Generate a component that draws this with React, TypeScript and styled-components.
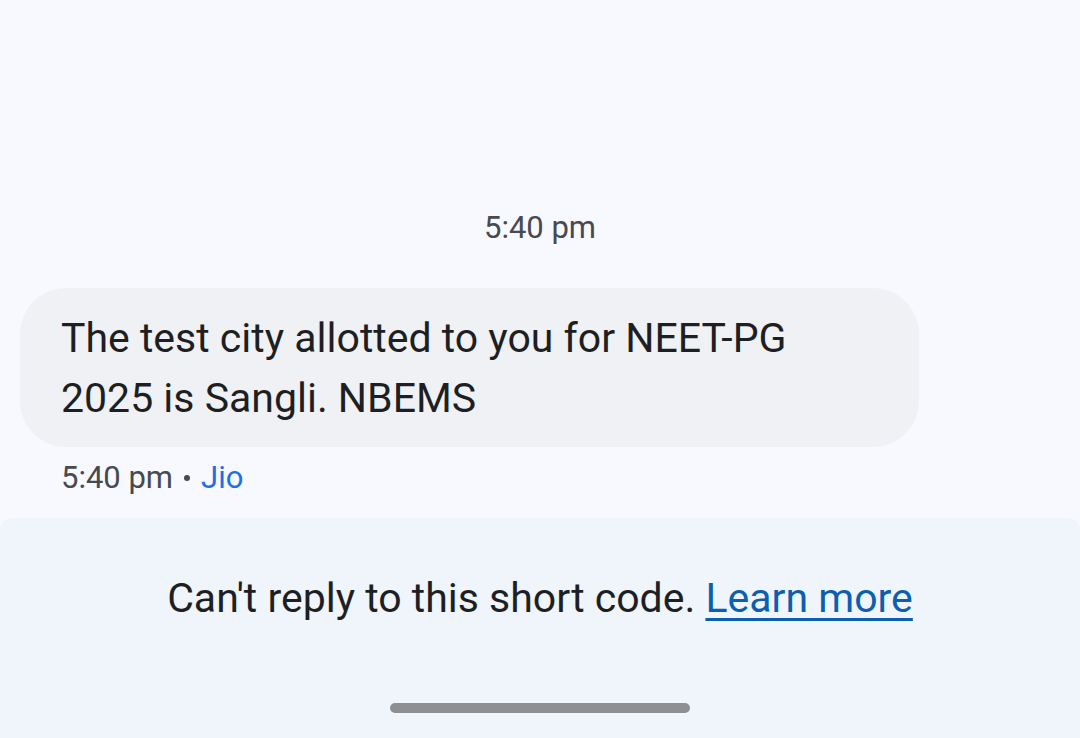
import React from "react";
import styled, { createGlobalStyle } from "styled-components";

const Global = createGlobalStyle`
  html, body { margin: 0; padding: 0; }
  body { background: #f7f9fe; font-family: Roboto, "Noto Sans", sans-serif; }
  #root { height: 738px; }
`;

const Screen = styled.div`
  width: 1080px;
  height: 738px;
  display: flex;
  flex-direction: column;
  background: #f7f9fe;
  overflow: hidden;
`;

const Thread = styled.div`
  flex: 1;
  display: flex;
  flex-direction: column;
  justify-content: flex-end;
  padding: 0 20px 22px 20px;
`;

const DayStamp = styled.div`
  text-align: center;
  font-size: 31px;
  line-height: 36px;
  color: #474a50;
  margin-bottom: 42px;
`;

const Bubble = styled.div`
  width: 899px;
  box-sizing: border-box;
  background: #f0f1f5;
  border-radius: 46px;
  padding: 20px 41px 19px 41px;
  font-size: 41px;
  line-height: 60px;
  color: #1d1f23;
`;

const Meta = styled.div`
  margin-top: 13px;
  padding-left: 41px;
  font-size: 31px;
  line-height: 36px;
  color: #474a50;
  display: flex;
  align-items: center;
  gap: 11px;
`;

const Dot = styled.span`
  width: 6px;
  height: 6px;
  border-radius: 50%;
  background: #474a50;
`;

const Carrier = styled.span`
  color: #1f6fe5;
`;

const Footer = styled.div`
  height: 220px;
  background: #f0f4fb;
  border-radius: 12px 12px 0 0;
  display: flex;
  flex-direction: column;
  align-items: center;
`;

const Notice = styled.div`
  margin-top: 56px;
  font-size: 41px;
  line-height: 48px;
  color: #1d1f23;
`;

const Link = styled.a`
  color: #0b5fb0;
  text-decoration: underline;
  text-decoration-thickness: 3px;
  text-underline-offset: 6px;
`;

const HomeBar = styled.div`
  margin-top: auto;
  margin-bottom: 25px;
  width: 300px;
  height: 10px;
  border-radius: 5px;
  background: #8e8f93;
`;

export default function App() {
  return (
    <Screen>
      <Global />
      <Thread>
        <DayStamp>5:40 pm</DayStamp>
        <Bubble>
          The test city allotted to you for NEET-PG
          <br />
          2025 is Sangli. NBEMS
        </Bubble>
        <Meta>
          5:40 pm <Dot /> <Carrier>Jio</Carrier>
        </Meta>
      </Thread>
      <Footer>
        <Notice>
          Can't reply to this short code. <Link>Learn more</Link>
        </Notice>
        <HomeBar />
      </Footer>
    </Screen>
  );
}
